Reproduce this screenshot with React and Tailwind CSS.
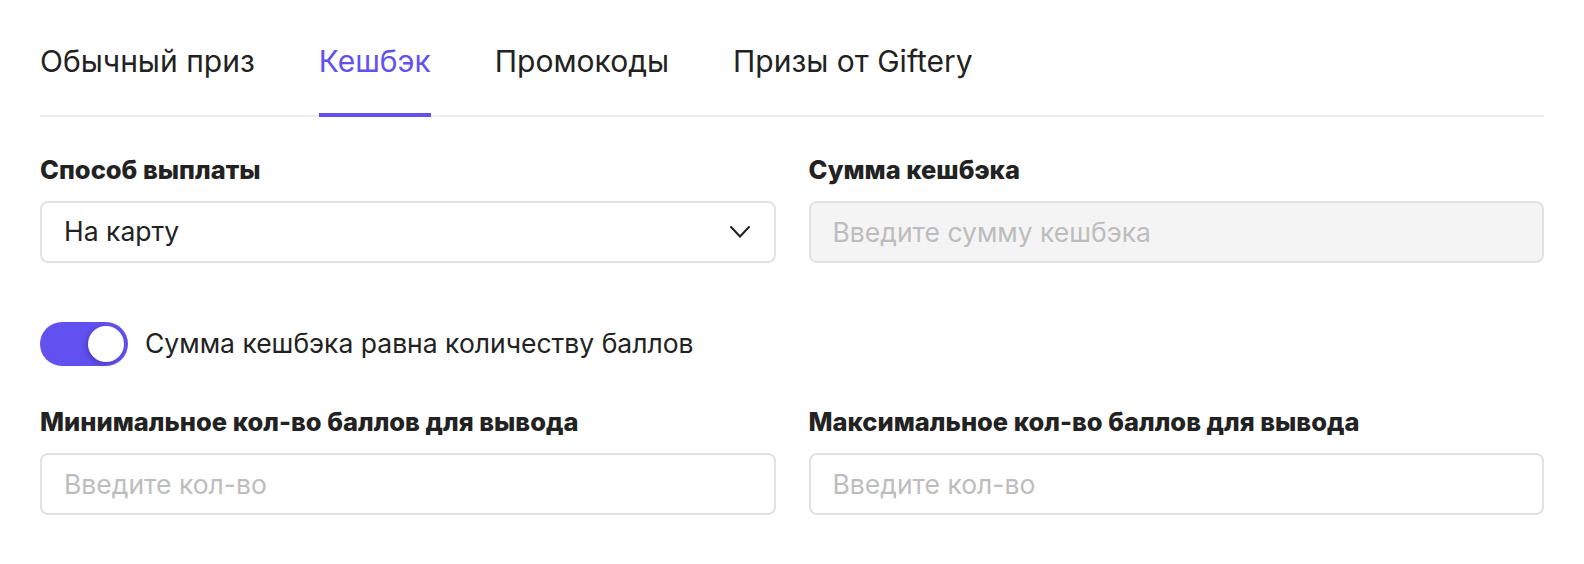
import React, { useState } from "react";

const tabs = ["Обычный приз", "Кешбэк", "Промокоды", "Призы от Giftery"];

const inputClass =
  "block w-full h-[62px] px-[22px] rounded-[8px] border-2 border-[#e2e2e2] text-[26.5px] text-[#222] placeholder-[#bdbdbd] outline-none";

const Field = ({ label, children }) => (
  <div className="flex flex-col">
    <label className="mb-[16px] text-[25.5px] leading-[30px] font-extrabold text-[#222]">
      {label}
    </label>
    {children}
  </div>
);

const App = () => {
  const [active, setActive] = useState(1);
  const [equal, setEqual] = useState(true);

  return (
    <div
      className="bg-white w-full h-[560px] overflow-hidden pl-[40px] pr-[40px] pt-[38px] text-[#222]"
      style={{ fontFamily: "Inter, 'Noto Sans', sans-serif" }}
    >
      {/* Табы */}
      <div className="flex gap-[64px] border-b-2 border-[#eeeeee]">
        {tabs.map((t, i) => (
          <button
            key={t}
            onClick={() => setActive(i)}
            className={
              "relative pb-[31px] text-[30px] leading-[46px] " +
              (i === active ? "text-[#6250ef]" : "text-[#222]")
            }
          >
            {t}
            {i === active && (
              <span className="absolute left-0 right-0 -bottom-[2px] h-[4px] bg-[#6250ef]" />
            )}
          </button>
        ))}
      </div>

      <div className="mt-[38px] grid grid-cols-2 gap-x-[33px]">
        <Field label="Способ выплаты">
          <div className={inputClass + " flex items-center justify-between"}>
            <span>На карту</span>
            <svg width="20" height="12" viewBox="0 0 20 12" fill="none" className="mr-[2px]">
              <path d="M1 1L10 10.5L19 1" stroke="#222" strokeWidth="2" strokeLinecap="round" strokeLinejoin="miter" />
            </svg>
          </div>
        </Field>
        <Field label="Сумма кешбэка">
          <input
            disabled
            className={inputClass + " bg-[#f4f4f4]"}
            placeholder="Введите сумму кешбэка"
          />
        </Field>
      </div>

      {/* Переключатель */}
      <div className="mt-[59px] flex items-center gap-[17px]">
        <button
          onClick={() => setEqual(!equal)}
          className={
            "w-[88px] h-[44px] shrink-0 rounded-full flex items-center px-[4px] " +
            (equal ? "bg-[#6250ef] justify-end" : "bg-[#d9d9d9] justify-start")
          }
        >
          <span className="w-[36px] h-[36px] rounded-full bg-white shadow-[-2px_2px_5px_rgba(40,20,120,0.35)]" />
        </button>
        <span className="text-[26.5px]">Сумма кешбэка равна количеству баллов</span>
      </div>

      <div className="mt-[41px] grid grid-cols-2 gap-x-[33px]">
        <Field label="Минимальное кол-во баллов для вывода">
          <input className={inputClass} placeholder="Введите кол-во" />
        </Field>
        <Field label="Максимальное кол-во баллов для вывода">
          <input className={inputClass} placeholder="Введите кол-во" />
        </Field>
      </div>
    </div>
  );
};

export default App;
